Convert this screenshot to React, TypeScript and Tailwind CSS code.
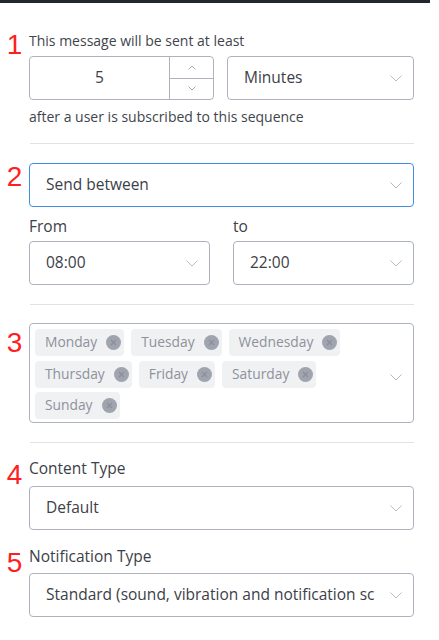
import React from 'react'

function Chevron({ className = '' }: { className?: string }) {
  return (
    <svg width="12" height="7" viewBox="0 0 12 7" className={className} fill="none">
      <polyline points="0.5,0.5 6,6 11.5,0.5" stroke="#b8bcc4" strokeWidth="1" />
    </svg>
  )
}

function Num({ n, className = '' }: { n: string; className?: string }) {
  return (
    <div className={`w-[29px] shrink-0 text-center font-['Liberation_Sans',sans-serif] text-[28px] leading-none text-[#ff1f1f] ${className}`}>
      {n}
    </div>
  )
}

function Select({ value, focused = false, className = '' }: { value: string; focused?: boolean; className?: string }) {
  return (
    <div
      className={`flex h-[44px] items-center rounded-[4px] border pl-[16px] pr-[11px] ${
        focused ? 'border-[#3f8ee3]' : 'border-[#adb3bc]'
      } ${className}`}
    >
      <span className="min-w-0 flex-1 overflow-hidden whitespace-nowrap text-[15.5px] text-[#3c4048]">{value}</span>
      <Chevron className="ml-[6px] shrink-0" />
    </div>
  )
}

function Chip({ label }: { label: string }) {
  return (
    <div className="flex h-[27px] items-center gap-[9px] rounded-[4px] bg-[#f0f1f3] pl-[10px] pr-[3px] text-[13.8px] text-[#8d929a]">
      <span>{label}</span>
      <span className="flex h-[15px] w-[15px] items-center justify-center rounded-full bg-[#9fa4ae]">
        <svg width="7" height="7" viewBox="0 0 7 7">
          <path d="M1 1 L6 6 M6 1 L1 6" stroke="#8a8f99" strokeWidth="1.2" />
        </svg>
      </span>
    </div>
  )
}

const days = ['Monday', 'Tuesday', 'Wednesday', 'Thursday', 'Friday', 'Saturday', 'Sunday']

export default function App() {
  return (
    <div className="h-[640px] w-[439px] overflow-hidden bg-white font-['Open_Sans',sans-serif] text-[#3c4048]">
      <div className="h-[3px] w-[430px] bg-[#23272e]" />

      <div className="pr-[25px]">
        {/* 1 */}
        <div className="mt-[28px] flex">
          <Num n="1" />
          <div className="flex-1">
            <p className="text-[14px] leading-[20px] text-[#40454d]">This message will be sent at least</p>
            <div className="mt-[5px] flex gap-[13px]">
              <div className="flex h-[44px] w-[185px] rounded-[4px] border border-[#adb3bc]">
                <div className="flex flex-1 items-center justify-center text-[15.5px]">5</div>
                <div className="flex w-[44px] flex-col border-l border-[#adb3bc]">
                  <div className="flex flex-1 items-center justify-center border-b border-[#adb3bc]">
                    <svg width="8" height="5" viewBox="0 0 8 5" fill="none">
                      <polyline points="0.5,4.5 4,1 7.5,4.5" stroke="#a9aeb6" strokeWidth="1" />
                    </svg>
                  </div>
                  <div className="flex flex-1 items-center justify-center">
                    <svg width="8" height="5" viewBox="0 0 8 5" fill="none">
                      <polyline points="0.5,0.5 4,4 7.5,0.5" stroke="#a9aeb6" strokeWidth="1" />
                    </svg>
                  </div>
                </div>
              </div>
              <Select value="Minutes" className="flex-1" />
            </div>
            <p className="mt-[7px] text-[14px] leading-[20px] text-[#40454d]">after a user is subscribed to this sequence</p>
          </div>
        </div>

        <div className="ml-[30px] mt-[16px] h-px bg-[#dfe2e6]" />

        {/* 2 */}
        <div className="mt-[19px] flex">
          <Num n="2" />
          <div className="flex-1">
            <Select value="Send between" focused />
            <div className="mt-[9px] grid grid-cols-2 gap-x-[23px]">
              <div>
                <p className="text-[15.5px] leading-[20px]">From</p>
                <Select value="08:00" className="mt-[5px]" />
              </div>
              <div>
                <p className="text-[15.5px] leading-[20px]">to</p>
                <Select value="22:00" className="mt-[5px]" />
              </div>
            </div>
          </div>
        </div>

        <div className="ml-[30px] mt-[19px] h-px bg-[#dfe2e6]" />

        {/* 3 */}
        <div className="mt-[18px] flex">
          <Num n="3" className="mt-[6px]" />
          <div className="flex h-[100px] flex-1 rounded-[4px] border border-[#adb3bc] pl-[5px] pr-[11px] pt-[5px]">
            <div className="flex flex-1 flex-wrap content-start gap-x-[7px] gap-y-[4.5px] pr-[26px]">
              {days.map((d) => (
                <Chip key={d} label={d} />
              ))}
            </div>
            <Chevron className="mt-[45px] shrink-0" />
          </div>
        </div>

        <div className="ml-[30px] mt-[19px] h-px bg-[#dfe2e6]" />

        {/* 4 */}
        <div className="mt-[15px] flex">
          <Num n="4" className="mt-[3px]" />
          <div className="flex-1">
            <p className="text-[15.5px] leading-[20px]">Content Type</p>
            <Select value="Default" className="mt-[8px]" />
          </div>
        </div>

        {/* 5 */}
        <div className="mt-[16px] flex">
          <Num n="5" className="mt-[3px]" />
          <div className="flex-1">
            <p className="text-[15.5px] leading-[20px]">Notification Type</p>
            <Select value="Standard (sound, vibration and notification sc" className="mt-[7px]" />
          </div>
        </div>
      </div>
    </div>
  )
}
